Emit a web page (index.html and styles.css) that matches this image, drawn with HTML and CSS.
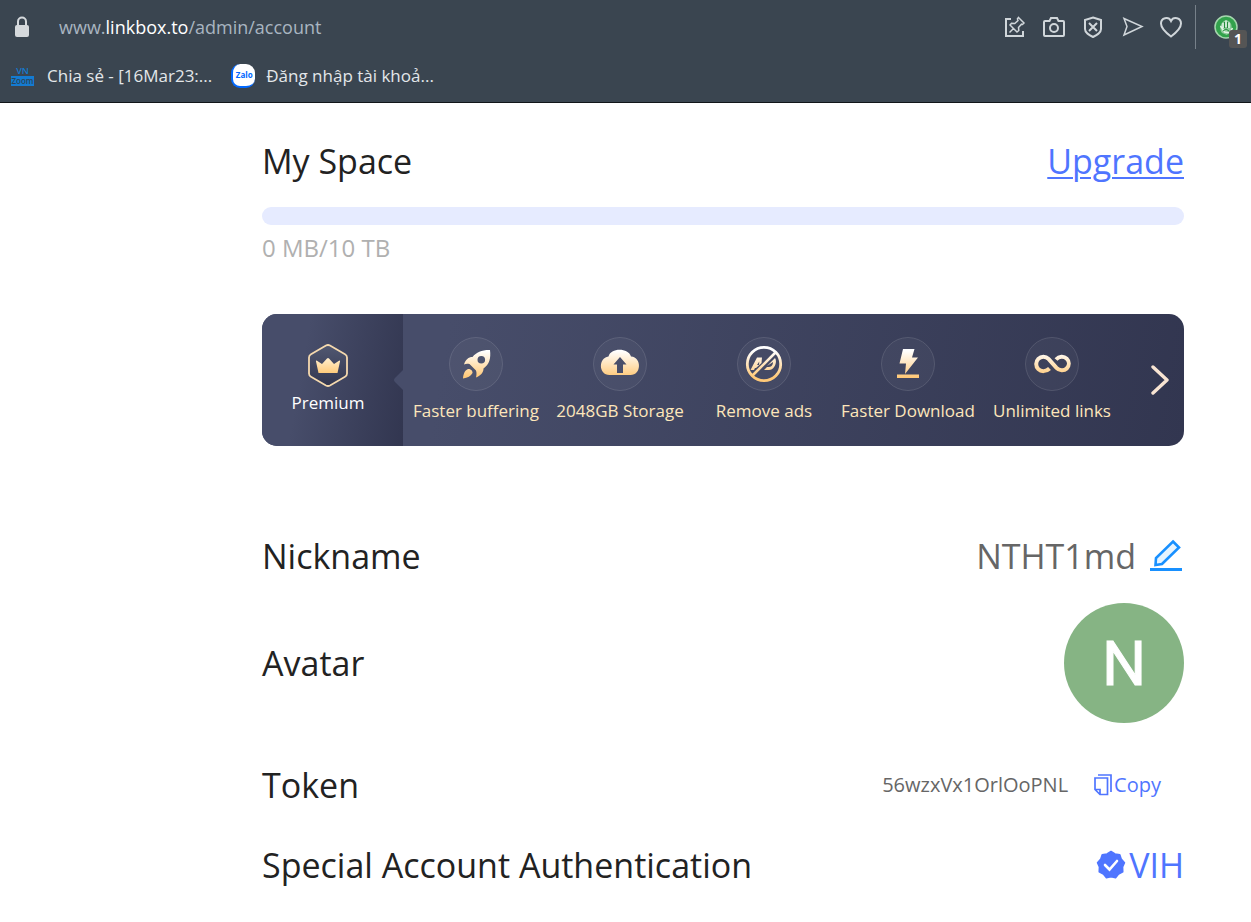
FILE: index.html
```html
<!DOCTYPE html>
<html lang="en">
<head>
<meta charset="utf-8">
<title>Linkbox account</title>
<link rel="stylesheet" href="styles.css">
</head>
<body>
<header class="browser">
  <div class="address-row">
    <svg class="lock" width="16" height="22" viewBox="0 0 16 22"><path d="M4 10V5.500a4 4 0 0 1 8 0V10" fill="none" stroke="#d5d9dc" stroke-width="2"/><rect x="1" y="9" width="14" height="12" rx="2" fill="#d5d9dc"/></svg>
    <div class="url">www.<span class="domain">linkbox.to</span>/admin/account</div>
    <div class="tools">
      <button class="tool thin" aria-label="Pin"><svg width="24" height="24" viewBox="0 0 24 24"><path d="M8 4H3v17h17v-5" stroke-width="2"/><path d="M15.500 2.500l5.500 5.500-1.500 1.500-1-.3-3 3.300.3 3-1.800 1.500-7-7L8.500 8.200l3.300.3L15 5.500l-.6-1.600zM10.500 13.500L6.500 17.500"/></svg></button>
      <button class="tool" aria-label="Snapshot"><svg width="24" height="24" viewBox="0 0 24 24"><path d="M3 6h4.500l1.500-3h6l1.500 3H21a1 1 0 0 1 1 1v13a1 1 0 0 1-1 1H3a1 1 0 0 1-1-1V7a1 1 0 0 1 1-1z"/><circle cx="12" cy="13" r="4"/></svg></button>
      <button class="tool" aria-label="Ad blocker"><svg width="24" height="24" viewBox="0 0 24 24"><path d="M12 2.500l8 2.500v9c0 4-4 6-8 8-4-2-8-4-8-8V5zM8 8l8 8M16 8l-8 8"/></svg></button>
      <button class="tool thin" aria-label="Send"><svg width="24" height="24" viewBox="0 0 24 24"><path d="M4 3.500L22 11.500 4 20 7 11.500z"/></svg></button>
      <button class="tool" aria-label="Favourite"><svg width="24" height="24" viewBox="0 0 24 24"><path d="M12 21.500C8 18.500 2 14 2 8.500A5.300 5.300 0 0 1 12 6a5.300 5.300 0 0 1 10 2.500c0 5.500-6 10-10 13z"/></svg></button>
    </div>
    <button class="extension" aria-label="Extension">
      <svg width="24" height="24" viewBox="0 0 24 24"><circle cx="12" cy="12" r="11" fill="#32a24c" stroke="#a5d6ae" stroke-width="1.500"/><path d="M8 18c-3-4-2-11 4-13 6 1 7 8 4 11l-3 4z" fill="#8bc998"/><path d="M9 13V8M12 12V5.500M15 13V7.500M6.500 11l4 6 5 1 3-5" fill="none" stroke="#e2f3e5" stroke-width="1.500"/><path d="M10.500 13V7M13.500 13V7M9 16l3-2 3 2" fill="none" stroke="#258b3b"/></svg>
      <span class="badge">1</span>
    </button>
  </div>
  <nav class="bookmarks">
    <a class="bookmark" href="#"><span class="vn-icon"><span>VN</span><span class="vn-zoom">Zoom</span></span>Chia sẻ - [16Mar23:...</a>
    <a class="bookmark" href="#"><span class="zalo-icon">Zalo</span>Đăng nhập tài khoả...</a>
  </nav>
</header>

<main class="account">
  <section class="space">
    <div class="row"><h2>My Space</h2><a class="upgrade" href="#">Upgrade</a></div>
    <div class="progress" role="progressbar" aria-label="Used space" aria-valuenow="0"></div>
    <p class="usage">0 MB/10 TB</p>
  </section>

  <section class="banner">
    <svg width="0" height="0" class="defs"><defs>
      <linearGradient id="gold" x1="0" y1="14" x2="0" y2="40" gradientUnits="userSpaceOnUse"><stop offset="0" stop-color="#fff"/><stop offset="1" stop-color="#ffc978"/></linearGradient>
      <linearGradient id="crown" x1="0" y1="0" x2="0" y2="1"><stop offset="0" stop-color="#ffefcf"/><stop offset="1" stop-color="#ffcb7c"/></linearGradient>
      <linearGradient id="hex" x1="0" y1="0" x2="0" y2="1"><stop offset="0" stop-color="#515871"/><stop offset="1" stop-color="#323650"/></linearGradient>
    </defs></svg>
    <div class="premium">
      <svg width="40" height="46" viewBox="0 0 40 46"><path d="M18 2.500q2-1 4 0l15 8.700q2 1.200 2 3.300v16q0 2.200-2 3.300l-15 8.700q-2 1-4 0L3 33.800q-2-1.100-2-3.300v-16q0-2.100 2-3.300z" fill="url(#hex)" stroke="#f5d9ae" stroke-width="1.800"/><path d="M8 18.500q-.5-1.500 1-.8l5 3.300 5-5.500q1-1 2 0l5 5.500 5-3.300q1.500-.7 1 .8L29.500 30h-19z" fill="url(#crown)"/></svg>
      <span>Premium</span>
      <svg class="notch" width="9" height="20" viewBox="0 0 9 20"><path d="M9 0v20L1 12q-2-2 0-4z" fill="#474d6a"/></svg>
    </div>
    <ul class="features">
      <li><svg width="54" height="54" viewBox="0 0 54 54"><circle class="ring" cx="27" cy="27" r="26.500"/><path d="M41 13c-8-.2-13.500 2-17.500 7-4 0-7 2.500-8.500 7.500 2-1 3.500-1 5.500-.5l6.500 6.500c.8 2.500.5 4.500 0 7 5-2 7.500-5 7.500-9 6-4.500 7.500-10 6.500-18.500zM32.300 19a3.800 3.800 0 1 1 0 7.600 3.800 3.800 0 0 1 0-7.600zM14 41.500c.3-4 1.500-8 5-9.500 2.500-.5 5 2 4.500 4-1.500 3-5 5-9.500 5.500z" fill="url(#gold)" fill-rule="evenodd"/></svg>Faster buffering</li>
      <li><svg width="54" height="54" viewBox="0 0 54 54"><circle class="ring" cx="27" cy="27" r="26.500"/><path d="M16.500 38C5.500 38 5 21 15.500 19.500c2-9 20-9 22.500 0C49 20.500 48.500 38 37.500 38zM24 36h6v-8.500h3.500L27 20l-6.500 7.500H24z" fill="url(#gold)" fill-rule="evenodd"/></svg>2048GB Storage</li>
      <li><svg width="54" height="54" viewBox="0 0 54 54"><circle class="ring" cx="27" cy="27" r="26.500"/><g fill="none" stroke="url(#gold)"><circle cx="27" cy="27" r="16.700" stroke-width="2.800"/><path d="M15.500 38.500l23-23" stroke-width="2.600"/></g><path d="M13.500 33l6.500-12.500h5l-.5 5.500-5.500 5h-1l-1 2zM20 28h2l.3-3.500zM30 29l8-8c2.500 3 0 12-6 12h-5l3-3h2c3 0 4-3 4-5z" fill="url(#gold)" fill-rule="evenodd"/></svg>Remove ads</li>
      <li><svg width="54" height="54" viewBox="0 0 54 54"><circle class="ring" cx="27" cy="27" r="26.500"/><path d="M22 12h11.500l-2.500 8.500h6L24 37l1-10.500h-6.500zM16 37.500h22v3.500H16z" fill="url(#gold)"/></svg>Faster Download</li>
      <li><svg width="54" height="54" viewBox="0 0 54 54"><circle class="ring" cx="27" cy="27" r="26.500"/><path d="M24.500 31.500c-3.500 3.500-8.500 3.300-11.200.6-2.800-2.800-2.800-7.400 0-10.200s7.400-2.800 10.200 0l8 9c2.800 3 7.500 3.300 10.200.6 2.800-2.800 2.800-7 0-9.800s-7.500-2.800-10.700.8" fill="none" stroke="url(#gold)" stroke-width="4"/></svg>Unlimited links</li>
    </ul>
    <button class="next" aria-label="More features"><svg width="18" height="30" viewBox="0 0 18 30"><path d="M2 2l14 13L2 28" fill="none" stroke="#f8e4d2" stroke-width="3.400" stroke-linecap="round" stroke-linejoin="round"/></svg></button>
  </section>

  <section class="profile">
    <div class="row"><h2>Nickname</h2><div class="nickname">NTHT1md<button class="edit" aria-label="Edit nickname"><svg width="34" height="34" viewBox="0 0 34 34"><path d="M23 2.500l6 6-17 16.500-6.500 1 .5-7z" fill="#e6f4ff" stroke="#1890ff" stroke-width="2.600"/><path d="M0 30.500h32" stroke="#1890ff" stroke-width="3"/></svg></button></div></div>
    <div class="row avatar-row"><h2>Avatar</h2><div class="avatar">N</div></div>
    <div class="row token-row"><h2>Token</h2><div class="token"><span>56wzxVx1OrlOoPNL</span><button class="copy"><svg width="18" height="22" viewBox="0 0 18 22"><path d="M1 4h12.500v16.500H6L1 15.500zM1 15.500h5v5M4 1h13v17" fill="none" stroke="#4f75ff" stroke-width="1.700"/></svg>Copy</button></div></div>
    <div class="row"><h2>Special Account Authentication</h2><a class="verified" href="#"><svg width="30" height="30" viewBox="0 0 30 30"><path d="M15 1.500l4 2.400 4.800.8 1.400 4.400 3.300 3.700-1.900 4.200.2 4.800-4.200 2.200-3 3.700-4.600-.9-4.600.9-3-3.700-4.200-2.200.2-4.800-1.900-4.200 3.300-3.700 1.400-4.400 4.800-.8z" fill="#4f75ff" stroke="#4f75ff" stroke-width="1.500" stroke-linejoin="round"/><path d="M9 15l4.500 4.500L21 11" fill="none" stroke="#fff" stroke-width="2.600" stroke-linecap="round"/></svg>VIH</a></div>
  </section>
</main>
</body>
</html>
```
FILE: styles.css
```css
* { box-sizing: border-box; }
body {
  margin: 0;
  background: #fff;
  color: #222;
  font-family: "Open Sans", "Noto Sans", sans-serif;
}
button {
  padding: 0;
  border: 0;
  background: none;
  color: inherit;
  font: inherit;
  cursor: pointer;
}
svg { display: block; flex: none; }
a { text-decoration: none; }

.browser {
  background: #3a4550;
  border-bottom: 1px solid #111519;
  padding-bottom: 5px;
}
.address-row {
  display: flex;
  align-items: center;
  height: 54px;
  padding-left: 14px;
}
.url {
  flex: 1;
  margin-left: 29px;
  color: #a9b5c1;
  font-size: 18px;
}
.domain { color: #fff; font-weight: 500; }
.tools {
  display: flex;
  gap: 15px;
  padding-right: 12px;
}
.tool svg {
  fill: none;
  stroke: #d0d6da;
  stroke-width: 2;
}
.thin svg { stroke-width: 1.5; }
.extension {
  position: relative;
  height: 44px;
  padding: 0 13px 0 18px;
  border-left: 1px solid #77818a;
}
.badge {
  position: absolute;
  right: 4px;
  bottom: 1px;
  width: 18px;
  border-radius: 3px;
  background: #555;
  color: #fff;
  font-size: 14px;
  font-weight: 700;
  line-height: 18px;
}
.bookmarks {
  display: flex;
  gap: 19px;
  height: 43px;
  padding-left: 11px;
}
.bookmark {
  display: flex;
  align-items: center;
  color: #e3e7ea;
  font-size: 17px;
}
.vn-icon {
  width: 23px;
  margin-right: 13px;
  color: #147bd1;
  font-size: 9px;
  font-weight: 600;
  line-height: 10px;
  text-align: center;
}
.vn-icon span { display: block; }
.vn-icon .vn-zoom {
  background: #147bd1;
  color: #2c4357;
  font-size: 8px;
}
.zalo-icon {
  width: 24px;
  margin-right: 11px;
  border-left: 2px solid #0068ff;
  border-bottom: 2px solid #0068ff;
  border-radius: 9px;
  background: #fff;
  color: #0068ff;
  font-size: 8px;
  font-weight: 700;
  line-height: 22px;
  text-align: center;
}

.account { padding: 34px 67px 33px 262px; }
.row {
  display: flex;
  align-items: center;
  justify-content: space-between;
  font-size: 34px;
  line-height: 48px;
}
h2 { margin: 0; font-size: 34px; font-weight: 400; }
.upgrade {
  color: #4f75ff;
  text-decoration: underline;
  text-decoration-thickness: 2px;
  text-underline-offset: 3px;
}
.progress {
  height: 18px;
  margin-top: 22px;
  border-radius: 9px;
  background: #e6ebff;
}
.usage {
  margin: 7px 0 0;
  color: #b0b0b0;
  font-size: 24px;
  line-height: 32px;
}

.banner {
  display: flex;
  height: 132px;
  margin-top: 50px;
  border-radius: 15px;
  overflow: hidden;
  background: linear-gradient(100deg, #474d6a 20%, #323650);
}
.defs { position: absolute; }
.premium {
  position: relative;
  flex: none;
  display: flex;
  flex-direction: column;
  align-items: center;
  width: 141px;
  padding: 29px 9px 0 0;
  background: linear-gradient(100deg, #474d6a 30%, #323650);
  color: #fff;
  font-size: 17px;
  line-height: 28px;
}
.notch { position: absolute; right: 0; top: 56px; }
.features {
  flex: 1;
  display: grid;
  grid-template-columns: repeat(5, 1fr);
  margin: 0;
  padding: 23px 0 0 1px;
  list-style: none;
  color: #fde6bb;
  font-size: 17px;
  line-height: 24px;
  white-space: nowrap;
}
.features li {
  display: flex;
  flex-direction: column;
  align-items: center;
  gap: 8px;
  min-width: 0;
}
.ring { fill: #ffffff0a; stroke: #ffffff20; }
.next { width: 60px; padding-left: 27px; }

.profile { margin-top: 86px; }
.nickname { display: flex; align-items: center; color: #666; }
.edit { margin-left: 14px; }
.avatar-row { margin: 23px 0 38px; }
.avatar {
  width: 120px;
  border-radius: 50%;
  background: #86b484;
  color: #fff;
  font-family: Roboto, sans-serif;
  font-size: 62px;
  line-height: 122px;
  height: 120px;
  text-align: center;
  -webkit-text-stroke: 1px #fff;
}
.token-row { margin-bottom: 32px; }
.token {
  display: flex;
  align-items: center;
  gap: 26px;
  padding-right: 23px;
  color: #666;
  font-size: 20px;
}
.copy { display: flex; align-items: center; gap: 2px; color: #4f75ff; }
.verified { display: flex; align-items: center; gap: 3px; color: #4f75ff; }
```
